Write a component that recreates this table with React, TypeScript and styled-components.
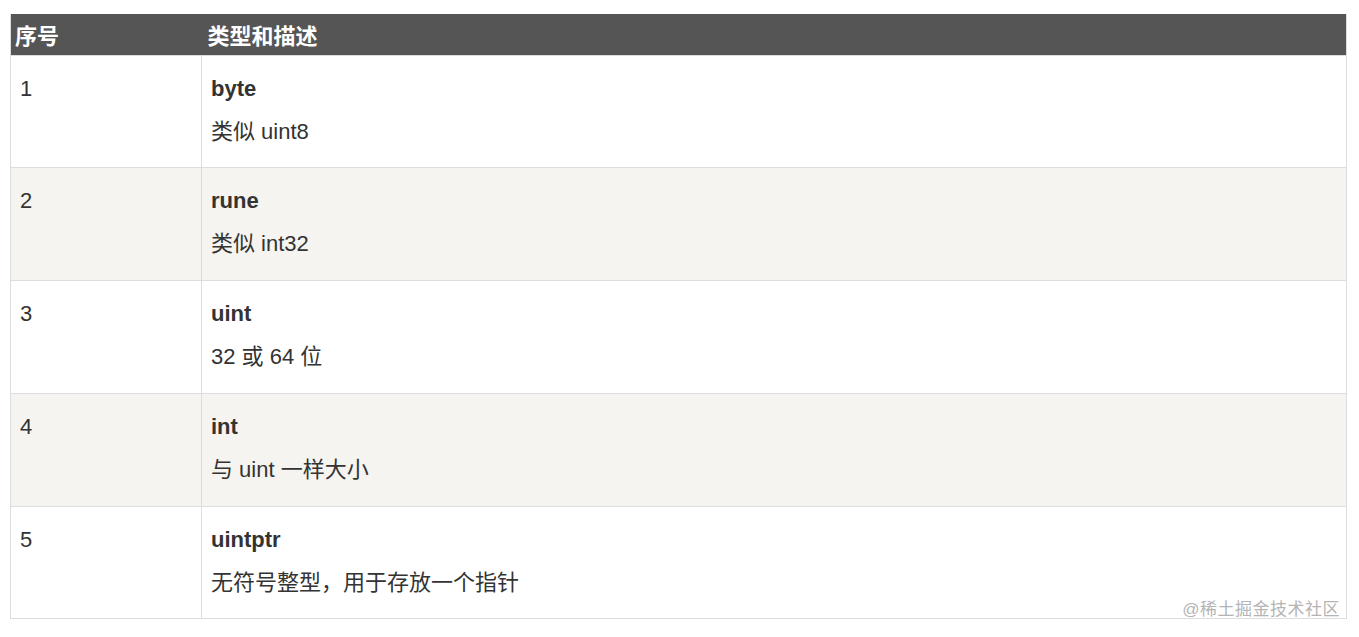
import styled, { createGlobalStyle } from 'styled-components'

const GlobalStyle = createGlobalStyle`
  html, body {
    margin: 0;
    padding: 0;
    background: #fff;
  }
  body {
    font-family: 'Liberation Sans', Arial, 'Noto Sans CJK SC', sans-serif;
    color: #333;
  }
`

const Page = styled.div`
  position: relative;
  padding: 14px 12px 18px 10px;
`

const Table = styled.table`
  width: 100%;
  border-collapse: collapse;
  font-size: 22px;
  border: 1px solid #ddd;
  border-top: none;
`

const HeadCell = styled.th<{ $wide?: boolean }>`
  background: #555;
  color: #fff;
  font-weight: bold;
  text-align: left;
  height: 41px;
  padding: 0 6px 0 ${(p) => (p.$wide ? '6px' : '4px')};
  box-sizing: border-box;
  width: ${(p) => (p.$wide ? 'auto' : '191px')};
`

const Row = styled.tr<{ $alt: boolean }>`
  background: ${(p) => (p.$alt ? '#f5f4f0' : '#fff')};
  border-top: 1px solid #ddd;
`

const Cell = styled.td`
  vertical-align: top;
  height: 112.8px;
  box-sizing: border-box;
  padding: 18px 9px 0;
  line-height: 30px;
  & + & {
    border-left: 1px solid #ddd;
  }
`

const Name = styled.div`
  font-weight: bold;
`

const Desc = styled.div`
  margin-top: 13px;
`

const Watermark = styled.div`
  position: absolute;
  right: 19px;
  bottom: 17px;
  font-size: 17px;
  color: #b4b4b4;
  letter-spacing: 0.5px;
`

const rows = [
  { name: 'byte', desc: '类似 uint8' },
  { name: 'rune', desc: '类似 int32' },
  { name: 'uint', desc: '32 或 64 位' },
  { name: 'int', desc: '与 uint 一样大小' },
  { name: 'uintptr', desc: '无符号整型，用于存放一个指针' },
]

export default function App() {
  return (
    <Page>
      <GlobalStyle />
      <Table>
        <thead>
          <tr>
            <HeadCell>序号</HeadCell>
            <HeadCell $wide>类型和描述</HeadCell>
          </tr>
        </thead>
        <tbody>
          {rows.map((r, i) => (
            <Row key={r.name} $alt={i % 2 === 1}>
              <Cell>{i + 1}</Cell>
              <Cell>
                <Name>{r.name}</Name>
                <Desc>{r.desc}</Desc>
              </Cell>
            </Row>
          ))}
        </tbody>
      </Table>
      <Watermark>@稀土掘金技术社区</Watermark>
    </Page>
  )
}
